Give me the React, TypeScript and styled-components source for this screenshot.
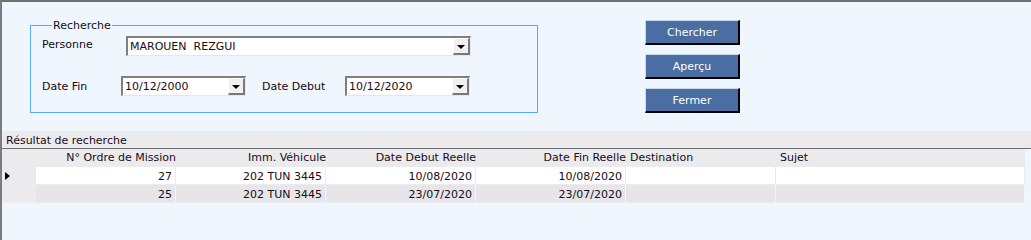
import styled, { createGlobalStyle } from "styled-components";

const GlobalStyle = createGlobalStyle`
  html, body {
    margin: 0;
    padding: 0;
    background: #eff6fe;
  }
  body {
    font-family: "DejaVu Sans", Verdana, sans-serif;
    font-size: 11px;
    color: #111;
  }
`;

const Window = styled.div`
  width: 1031px;
  height: 240px;
  box-sizing: border-box;
  border-top: 2px solid #707070;
  border-left: 2px solid #7c7c7c;
  background: #eff6fe;
  display: flex;
  flex-direction: column;
  overflow: hidden;
`;

const TopArea = styled.div`
  height: 129px;
  display: flex;
  align-items: flex-start;
  padding-left: 28px;
`;

const Group = styled.fieldset`
  margin: 17px 0 0 0;
  width: 508px;
  box-sizing: border-box;
  padding: 4px 0 16px 11px;
  border: 1px solid #5aa8f2;
  min-width: 0;
`;

const Legend = styled.legend`
  margin-left: 10px;
  padding: 0 1px;
  line-height: 13px;
  color: #111;
`;

const FormRow = styled.div<{ $top?: number }>`
  display: flex;
  align-items: center;
  height: 20px;
  margin-top: ${(p) => p.$top ?? 0}px;
`;

const Label = styled.span<{ $width: number; $lift?: number }>`
  width: ${(p) => p.$width}px;
  flex: none;
  white-space: nowrap;
  position: relative;
  top: -${(p) => p.$lift ?? 0}px;
  color: #140814;
`;

const Combo = styled.div<{ $width: number }>`
  width: ${(p) => p.$width}px;
  height: 20px;
  box-sizing: border-box;
  flex: none;
  display: flex;
  background: #fff;
  border-top: 2px solid #7f7f7f;
  border-left: 2px solid #7f7f7f;
  border-right: 1px solid #e6e6e6;
  border-bottom: 1px solid #e6e6e6;
`;

const ComboText = styled.span`
  flex: 1;
  padding-left: 2px;
  line-height: 17px;
  white-space: pre;
  color: #1a0a12;
`;

const DropButton = styled.span`
  width: 17px;
  flex: none;
  box-sizing: border-box;
  background: #f0f0f0;
  border-top: 1px solid #fff;
  border-left: 1px solid #fff;
  border-right: 2px solid #7a7a7a;
  border-bottom: 2px solid #7a7a7a;
  display: flex;
  align-items: center;
  justify-content: center;
  &::after {
    content: "";
    border-left: 4px solid transparent;
    border-right: 4px solid transparent;
    border-top: 4px solid #000;
    margin-top: 1px;
  }
`;

const Gap = styled.span<{ $width: number }>`
  width: ${(p) => p.$width}px;
  flex: none;
`;

const ButtonColumn = styled.div`
  margin-left: 107px;
  padding-top: 18px;
  display: flex;
  flex-direction: column;
  gap: 9px;
`;

const Button = styled.button`
  width: 95px;
  height: 25px;
  box-sizing: border-box;
  padding: 0;
  background: #4a6ea2;
  color: #fff;
  font-family: inherit;
  font-size: 11px;
  border-top: 1px solid #c8d8ec;
  border-left: 1px solid #c8d8ec;
  border-right: 2px solid #000;
  border-bottom: 2px solid #000;
  cursor: pointer;
`;

const ResultBand = styled.div`
  height: 18px;
  box-sizing: border-box;
  background: #ebebee;
  border-bottom: 1px solid #6e6e6e;
  padding: 2px 0 0 4px;
  line-height: 15px;
  color: #1b0a16;
`;

const Grid = styled.div`
  width: 1023px;
  display: flex;
  flex-direction: column;
`;

const COLS = "34px 140px 150px 150px 150px 150px 249px";

const HeaderRow = styled.div`
  display: grid;
  grid-template-columns: ${COLS};
  height: 18px;
  background: #ebebee;
  line-height: 18px;
  color: #200a16;
`;

const HeadCell = styled.div<{ $left?: boolean }>`
  white-space: nowrap;
  overflow: visible;
  text-align: ${(p) => (p.$left ? "left" : "right")};
  padding-left: ${(p) => (p.$left ? 4 : 0)}px;
`;

const DataRow = styled.div<{ $alt?: boolean }>`
  display: grid;
  grid-template-columns: ${COLS};
  height: 18px;
  box-sizing: border-box;
  background: ${(p) => (p.$alt ? "#e6e6ea" : "#fff")};
  border-bottom: 1px solid ${(p) => (p.$alt ? "#eeeef0" : "#ececee")};
`;

const RowHeader = styled.div`
  background: #ebebee;
  display: flex;
  align-items: center;
  padding-left: 3px;
`;

const Pointer = styled.span`
  width: 0;
  height: 0;
  border-top: 4.5px solid transparent;
  border-bottom: 4.5px solid transparent;
  border-left: 5px solid #000;
`;

const Cell = styled.div<{ $alt?: boolean }>`
  box-sizing: border-box;
  border-right: 1px solid ${(p) => (p.$alt ? "#f6f6f8" : "#eaeaec")};
  text-align: right;
  padding: 2px 3px 0 0;
  line-height: 15px;
  white-space: nowrap;
  color: #1a0a12;
`;

type Mission = {
  id: string;
  vehicule: string;
  debut: string;
  fin: string;
};

const missions: Mission[] = [
  { id: "27", vehicule: "202 TUN 3445", debut: "10/08/2020", fin: "10/08/2020" },
  { id: "25", vehicule: "202 TUN 3445", debut: "23/07/2020", fin: "23/07/2020" },
];

export default function App() {
  return (
    <>
      <GlobalStyle />
      <Window>
        <TopArea>
          <Group>
            <Legend>Recherche</Legend>
            <FormRow>
              <Label $width={84} $lift={2}>Personne</Label>
              <Combo $width={345}>
                <ComboText>MAROUEN  REZGUI</ComboText>
                <DropButton />
              </Combo>
            </FormRow>
            <FormRow $top={20}>
              <Label $width={79}>Date Fin</Label>
              <Combo $width={125}>
                <ComboText>10/12/2000</ComboText>
                <DropButton />
              </Combo>
              <Gap $width={16} />
              <Label $width={83}>Date Debut</Label>
              <Combo $width={125}>
                <ComboText>10/12/2020</ComboText>
                <DropButton />
              </Combo>
            </FormRow>
          </Group>
          <ButtonColumn>
            <Button>Chercher</Button>
            <Button>Aperçu</Button>
            <Button>Fermer</Button>
          </ButtonColumn>
        </TopArea>
        <ResultBand>Résultat de recherche</ResultBand>
        <Grid>
          <HeaderRow>
            <div />
            <HeadCell>N° Ordre de Mission</HeadCell>
            <HeadCell>Imm. Véhicule</HeadCell>
            <HeadCell>Date Debut Reelle</HeadCell>
            <HeadCell>Date Fin Reelle</HeadCell>
            <HeadCell $left>Destination</HeadCell>
            <HeadCell $left>Sujet</HeadCell>
          </HeaderRow>
          {missions.map((m, i) => (
            <DataRow key={m.id} $alt={i % 2 === 1}>
              <RowHeader>{i === 0 ? <Pointer /> : null}</RowHeader>
              <Cell $alt={i % 2 === 1}>{m.id}</Cell>
              <Cell $alt={i % 2 === 1}>{m.vehicule}</Cell>
              <Cell $alt={i % 2 === 1}>{m.debut}</Cell>
              <Cell $alt={i % 2 === 1}>{m.fin}</Cell>
              <Cell $alt={i % 2 === 1} />
              <Cell $alt={i % 2 === 1} />
            </DataRow>
          ))}
        </Grid>
      </Window>
    </>
  );
}
